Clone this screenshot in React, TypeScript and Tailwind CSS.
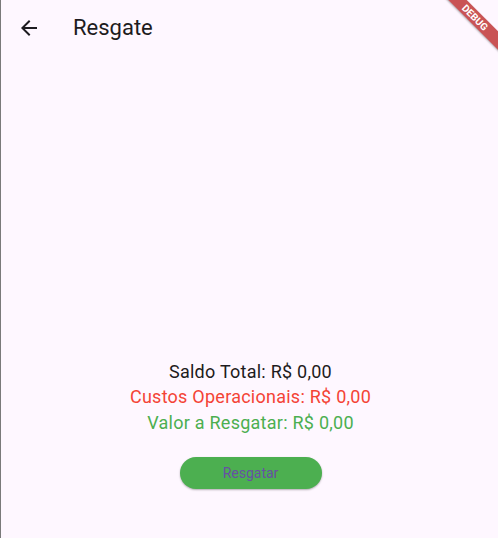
import React from 'react';

const App = () => {
  return (
    <div
      className="relative flex h-[538px] w-[498px] flex-col overflow-hidden border-l border-[#7a7a7a] bg-[#fef7ff]"
      style={{ fontFamily: 'Roboto, "Noto Sans", sans-serif' }}
    >
      {/* App bar */}
      <div className="flex h-14 items-center">
        <button className="ml-[16px] flex h-6 w-6 items-center justify-center text-[#1d1b20]" aria-label="Voltar">
          <svg width="24" height="24" viewBox="0 0 24 24" fill="currentColor">
            <path d="M20 11H7.83l5.59-5.59L12 4l-8 8 8 8 1.41-1.41L7.83 13H20v-2z" />
          </svg>
        </button>
        <h1 className="ml-[32px] text-[22px] leading-7 text-[#1d1b20]">Resgate</h1>
      </div>

      {/* Body */}
      <div className="flex flex-1 flex-col items-center justify-end pb-[49px] pl-[2px]">
        <div className="flex flex-col items-center text-[18px] leading-[25.5px] tracking-[0.25px]">
          <p className="text-[#1d1b20]">Saldo Total: R$ 0,00</p>
          <p className="text-[#f44336]">Custos Operacionais: R$ 0,00</p>
          <p className="text-[#4caf50]">Valor a Resgatar: R$ 0,00</p>
        </div>
        <button className="mt-[22px] h-8 w-[142px] rounded-full bg-[#4caf50] text-[14px] text-[#6750a4] shadow-[0_1px_2px_rgba(0,0,0,0.3)]">
          Resgatar
        </button>
      </div>

      {/* Debug banner */}
      <div className="pointer-events-none absolute right-[-27px] top-[11px] w-[100px] rotate-45 bg-[#b71c1c]/75 text-center text-[10px] font-bold leading-[13px] text-white shadow-[0_1px_2px_rgba(0,0,0,0.3)]">
        DEBUG
      </div>
    </div>
  );
};

export default App;
